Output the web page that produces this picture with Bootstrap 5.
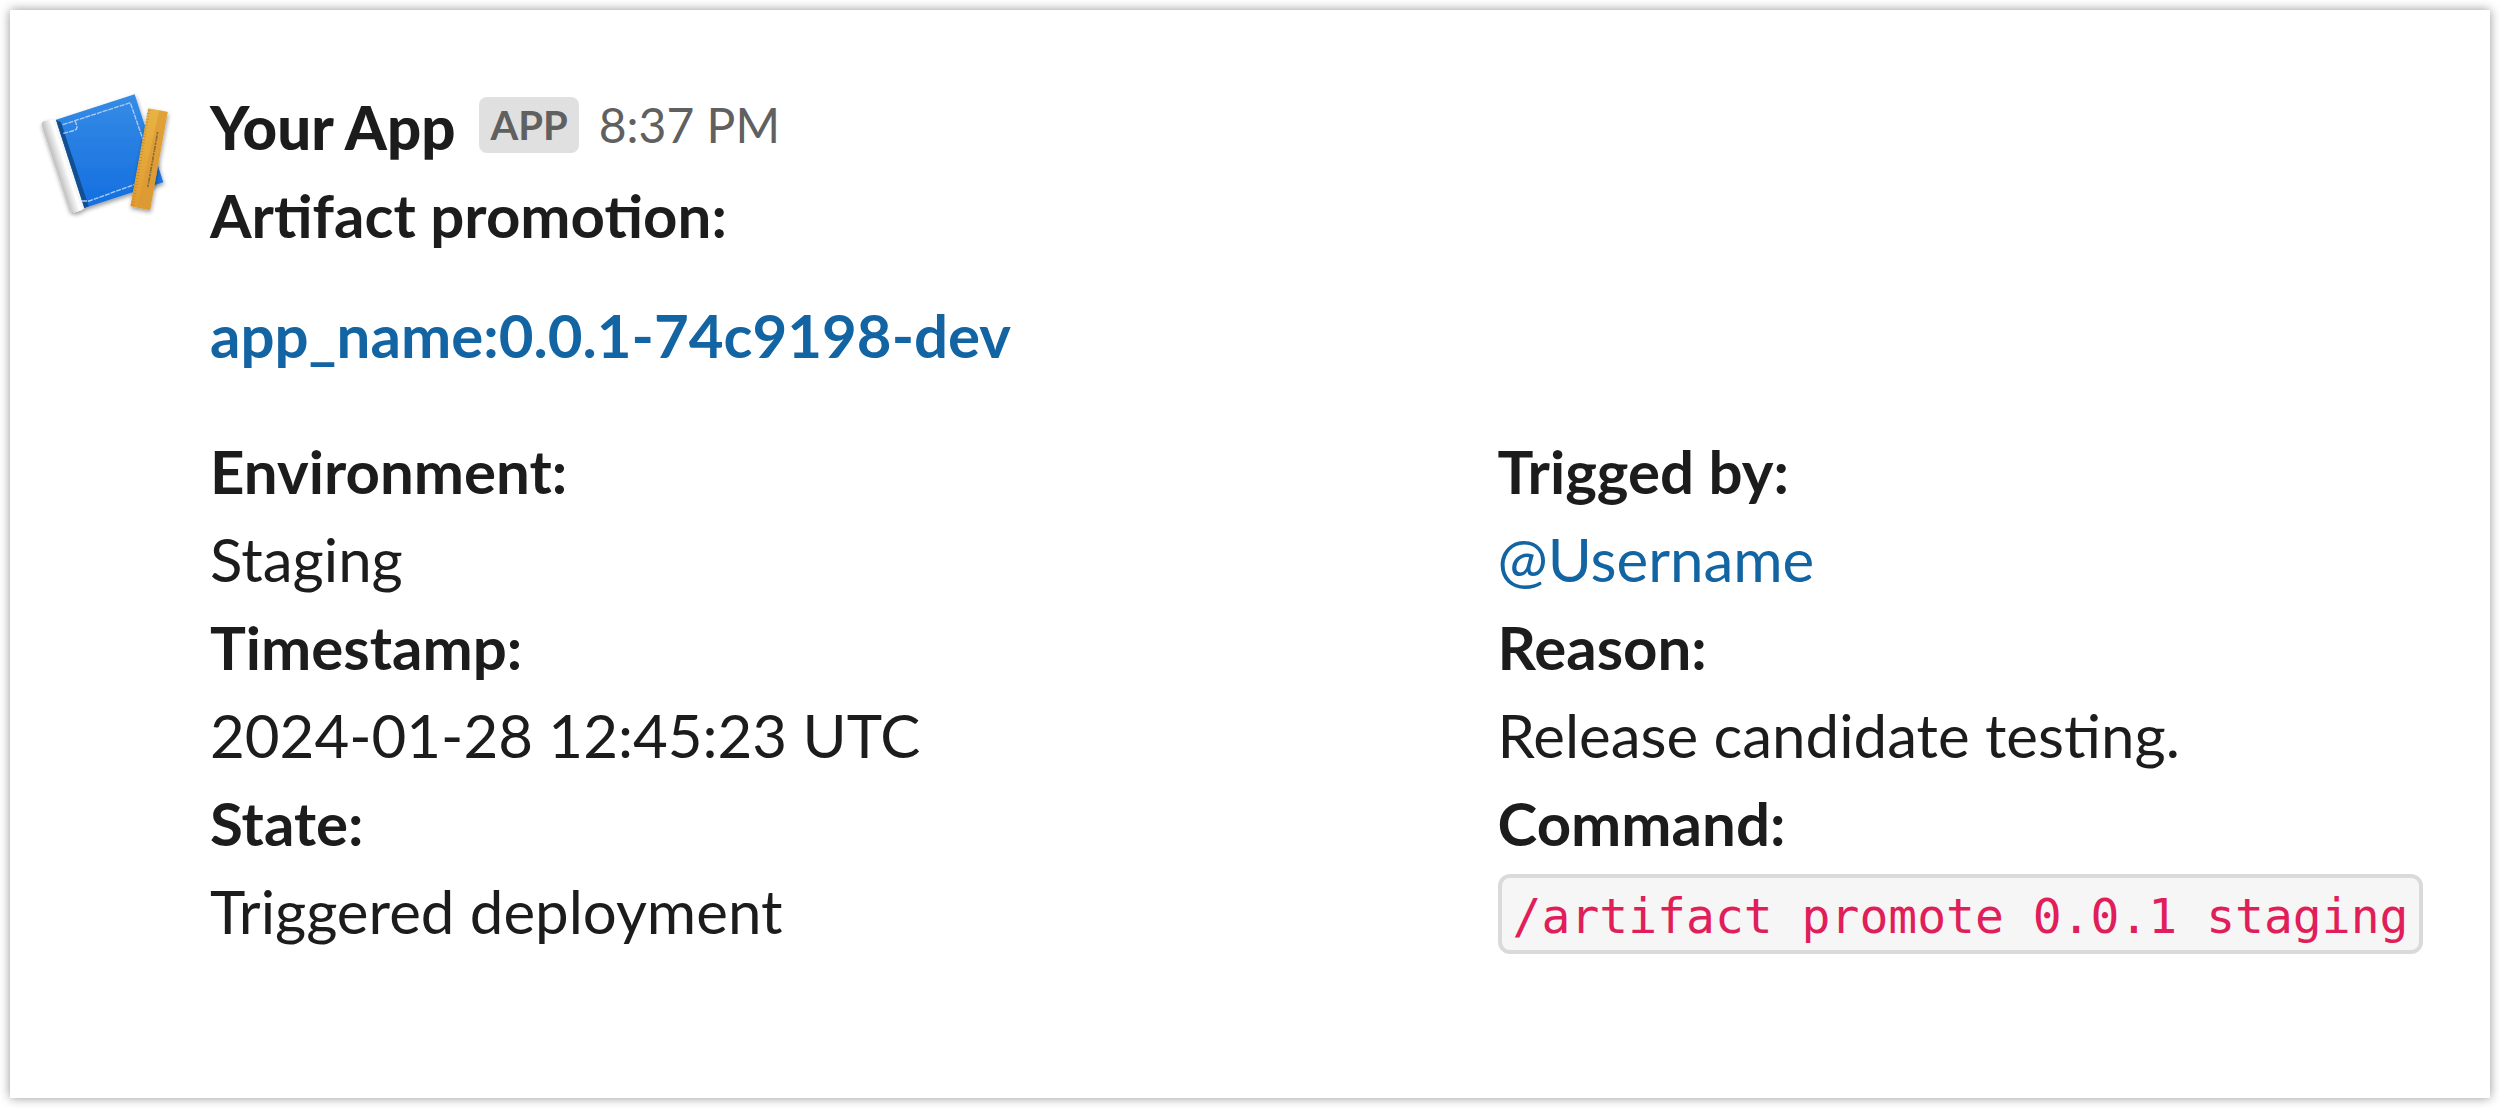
<!DOCTYPE html>
<html lang="en">
<head>
<meta charset="utf-8">
<meta name="viewport" content="width=device-width, initial-scale=1">
<title>Artifact promotion</title>
<link rel="stylesheet" href="https://cdn.jsdelivr.net/npm/bootstrap@5.3.0/dist/css/bootstrap.min.css">
<style>
  body { background: #fff; padding: 10px; color: #1d1c1d; font-family: Lato, "Liberation Sans", sans-serif; font-size: 60px; line-height: 88px; }
  .message { min-height: calc(100vh - 20px); padding: 73px 60px 140px 24px; gap: 32px; background: #fff; box-shadow: 0 0 10px rgba(0, 0, 0, .42); }
  .avatar { width: 144px; height: 144px; margin-top: 5px; }
  .sender { font-weight: 900; }
  .byline { gap: 24px; }
  .meta { gap: 20px; }
  .app-tag { padding: 0 11px; border-radius: 8px; background: #e0e0e0; color: #616061; font-size: 40px; line-height: 56px; font-weight: 700; }
  .sent-at { color: #616061; font-size: 48px; line-height: 56px; }
  .message a { color: #1264a3; text-decoration: none; }
  .message a:hover { text-decoration: underline; }
  .artifact { margin: 32px 0 48px; }
  .field-start { flex: 0 0 58%; }
  dt { font-weight: 700; }
  .command { display: block; width: fit-content; margin-top: 7px; padding: 6px 11px 2px; border: 4px solid #dadada; border-radius: 12px; background: #f6f6f6; color: #e01e5a; font-family: "DejaVu Sans Mono", "Liberation Mono", monospace; font-size: 48px; line-height: 64px; white-space: nowrap; }
</style>
<script src="https://cdn.jsdelivr.net/npm/bootstrap@5.3.0/dist/js/bootstrap.bundle.min.js"></script>
</head>
<body>
<main class="message d-flex align-items-start">
  <svg class="avatar flex-shrink-0" viewBox="102 264 432 432" role="img" aria-label="Your App">
    <defs>
      <linearGradient id="cover" x1="0" y1="0" x2="0" y2="1"><stop offset="0" stop-color="#368ce5"/><stop offset="1" stop-color="#136ee0"/></linearGradient>
      <linearGradient id="pages" gradientUnits="userSpaceOnUse" x1="168" y1="510" x2="212" y2="496"><stop offset="0" stop-color="#bcbcbc"/><stop offset=".35" stop-color="#dedede"/><stop offset=".7" stop-color="#fff"/><stop offset="1" stop-color="#f1f1f1"/></linearGradient>
      <linearGradient id="wood" x1="0" y1="0" x2="0" y2="1"><stop offset="0" stop-color="#e8b344"/><stop offset="1" stop-color="#e09b30"/></linearGradient>
      <filter id="drop" x="-20%" y="-20%" width="140%" height="140%"><feDropShadow dx="2" dy="7" stdDeviation="6" flood-color="#000" flood-opacity=".4"/></filter>
    </defs>
    <g filter="url(#drop)">
      <path fill="url(#pages)" d="M125 374Q124 366 134 363L150 360Q160 359 168 362L253 624Q250 629 238 633L226 637Q212 638 208 628Z"/>
      <path fill="url(#cover)" d="M168 359L404 283L490 547L253 624Z"/>
    </g>
    <path fill="#124f91" d="M168 359L183 367L266 619L253 624Z"/>
    <path fill="none" stroke="#a9cdf5" stroke-width="4" stroke-dasharray="15 3" d="M188 374L391 308L428 416M190 400L224 391Q234 386 230 375L225 362M246 603L268 603L402 554"/>
    <g filter="url(#drop)"><path fill="url(#wood)" d="M445 325L503 336L450 630L391 619Z"/></g>
    <path fill="#dc9833" opacity=".65" d="M478 331L503 336L450 630L412 623Z"/>
    <path fill="none" stroke="#bc8028" stroke-width="8" stroke-dasharray="2 7" d="M447 330L397 618"/>
    <path fill="none" stroke="#8d6b38" stroke-width="5" stroke-dasharray="7 3 13 2 4 3" d="M473 396L443 564"/>
  </svg>
  <div class="flex-grow-1">
    <header class="d-flex align-items-center byline">
      <span class="sender">Your App</span>
      <div class="d-flex align-items-center meta pb-1">
        <span class="app-tag">APP</span>
        <time class="sent-at" datetime="20:37">8:37 PM</time>
      </div>
    </header>
    <div class="fw-bold">Artifact promotion:</div>
    <div class="artifact fw-bold"><a href="#">app_name:0.0.1-74c9198-dev</a></div>
    <div class="d-flex">
      <dl class="field-start mb-0">
        <dt>Environment:</dt>
        <dd class="mb-0">Staging</dd>
        <dt>Timestamp:</dt>
        <dd class="mb-0">2024-01-28 12:45:23 UTC</dd>
        <dt>State:</dt>
        <dd class="mb-0">Triggered deployment</dd>
      </dl>
      <dl class="mb-0">
        <dt>Trigged by:</dt>
        <dd class="mb-0"><a href="#">@Username</a></dd>
        <dt>Reason:</dt>
        <dd class="mb-0">Release candidate testing.</dd>
        <dt>Command:</dt>
        <dd class="mb-0"><code class="command">/artifact promote 0.0.1 staging</code></dd>
      </dl>
    </div>
  </div>
</main>
</body>
</html>
